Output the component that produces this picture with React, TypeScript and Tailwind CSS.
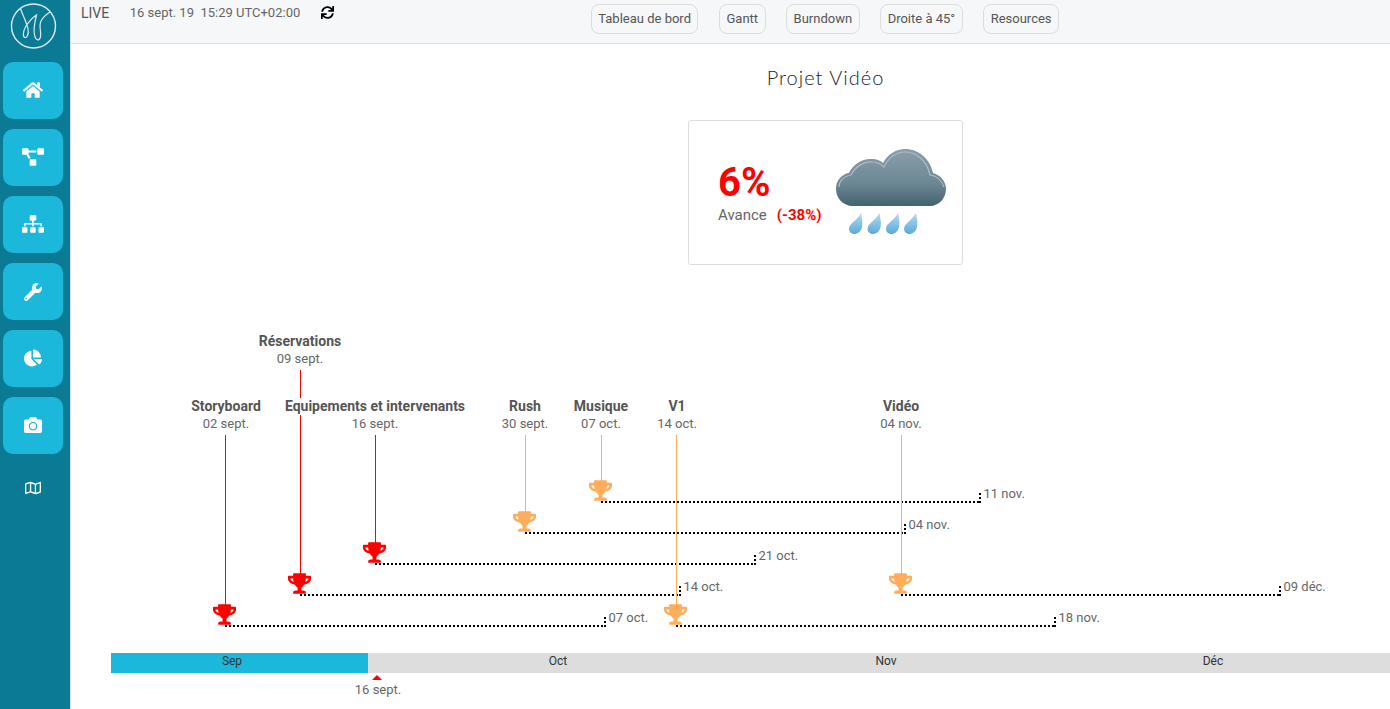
import { FaCamera, FaChartPie, FaHome, FaProjectDiagram, FaRegMap, FaSitemap, FaSync, FaTrophy, FaWrench } from 'react-icons/fa'

// the timeline canvas starts at x=71, y=300 of the page
const X0 = 71
const Y0 = 300

const RED = '#ff0000'
const ORANGE = '#ffad5a'

interface Milestone {
  title: string
  date: string
  labelX: number
  labelY: number
  lineX: number
  trophyY: number
  endX: number
  endDate: string
  color: string
}

const milestones: Milestone[] = [
  { title: 'Réservations', date: '09 sept.', labelX: 300, labelY: 333, lineX: 300, trophyY: 595, endX: 680, endDate: '14 oct.', color: RED },
  { title: 'Storyboard', date: '02 sept.', labelX: 226, labelY: 398, lineX: 225, trophyY: 626, endX: 605, endDate: '07 oct.', color: RED },
  { title: 'Equipements et intervenants', date: '16 sept.', labelX: 375, labelY: 398, lineX: 375, trophyY: 564, endX: 755, endDate: '21 oct.', color: RED },
  { title: 'Rush', date: '30 sept.', labelX: 525, labelY: 398, lineX: 525, trophyY: 533, endX: 905, endDate: '04 nov.', color: ORANGE },
  { title: 'Musique', date: '07 oct.', labelX: 601, labelY: 398, lineX: 601, trophyY: 502, endX: 980, endDate: '11 nov.', color: ORANGE },
  { title: 'V1', date: '14 oct.', labelX: 677, labelY: 398, lineX: 676, trophyY: 626, endX: 1055, endDate: '18 nov.', color: ORANGE },
  { title: 'Vidéo', date: '04 nov.', labelX: 901, labelY: 398, lineX: 901, trophyY: 595, endX: 1280, endDate: '09 déc.', color: ORANGE },
]

const months = [
  { name: 'Sep', x: 232 },
  { name: 'Oct', x: 558 },
  { name: 'Nov', x: 886 },
  { name: 'Déc', x: 1213 },
]

const navItems = [
  { icon: <FaHome size={20} className="-mt-[2px]" />, active: true },
  { icon: <FaProjectDiagram size={22} className="-mt-[1px]" />, active: true },
  { icon: <FaSitemap size={22} className="-mt-[1px]" />, active: true },
  { icon: <FaWrench size={18} />, active: true },
  { icon: <FaChartPie size={18} className="-mt-[1px]" />, active: true },
  { icon: <FaCamera size={18} className="-mt-[1px]" />, active: true },
  { icon: <FaRegMap size={16} />, active: false },
]

const tabs = ['Tableau de bord', 'Gantt', 'Burndown', 'Droite à 45°', 'Resources']

function Logo() {
  return (
    <svg width="70" height="62" viewBox="0 0 70 62" fill="none" stroke="#dcecf0">
      <circle cx="33.5" cy="26" r="22" strokeWidth="1.4" />
      <path
        d="M20.5 8.5C23 16 27 23 28 29C29 34 27 38 25 37.5C22.5 37 23 31 26 26C30 20 35 16 36.5 15C35 21 33 29 34.5 35C35.5 40 39 42 40.5 37C41.5 31 38.5 26 41 21C43 17 47 14 50 12"
        strokeWidth="1.2"
      />
    </svg>
  )
}

function RainCloud() {
  return (
    <svg width="112" height="88" viewBox="0 0 112 88">
      <defs>
        <linearGradient id="cloud" x1="0" y1="0" x2="0" y2="1">
          <stop offset="0" stopColor="#8a9fab" />
          <stop offset="0.6" stopColor="#6d8795" />
          <stop offset="1" stopColor="#44616f" />
        </linearGradient>
        <linearGradient id="drop" x1="0" y1="0" x2="0" y2="1">
          <stop offset="0" stopColor="#b5dcf1" />
          <stop offset="1" stopColor="#5aa9d9" />
        </linearGradient>
      </defs>
      <path
        d="M17 57C7 57 0 49 0 40C0 31 6 25 13 24C17 15 27 9 36 10C41 10 45 12 47 14C52 5 60 0 69 0C83 0 94 10 97 24C104 26 110 32 110 40C110 49 103 57 94 57Z"
        fill="url(#cloud)"
      />
      <path
        d="M3 38C3 32 8 27 15 26C19 18 28 12 36 13C41 13 45 15 48 18C53 8 61 3 69 3C81 3 91 12 94 26C101 27 106 32 108 38"
        fill="none"
        stroke="#a9bcc6"
        strokeWidth="1.2"
      />
      {[13, 31.5, 50, 68].map((x) => (
        <path
          key={x}
          transform={`translate(${x} 64)`}
          d="M12 0C13 6 14 10 13 14C12 19 8 21 5.5 21C2 21 0 18.5 0 16C0 10 8 8 12 0Z"
          fill="url(#drop)"
        />
      ))}
    </svg>
  )
}

function MilestoneMark({ m }: { m: Milestone }) {
  const lineTop = m.labelY + 37
  return (
    <>
      <div
        className="absolute w-px"
        style={{ left: m.lineX - X0, top: lineTop - Y0, height: m.trophyY - 18 - lineTop, backgroundColor: m.color }}
      />
      <FaTrophy
        size={23}
        className="absolute"
        style={{ left: m.lineX - X0 - 12, top: m.trophyY - 23 - Y0, color: m.color }}
      />
      <div
        className="absolute h-[2px] bg-[repeating-linear-gradient(90deg,#000_0_2px,transparent_2px_4px)]"
        style={{ left: m.lineX - X0, top: m.trophyY - Y0 - 1, width: m.endX - m.lineX + 1 }}
      />
      <div
        className="absolute h-[12px] w-[2px] bg-[repeating-linear-gradient(0deg,#000_0_2px,transparent_2px_4px)]"
        style={{ left: m.endX - 1 - X0, top: m.trophyY - 11 - Y0 }}
      />
      <span
        className="absolute text-[13px] leading-4 text-[#666] whitespace-nowrap"
        style={{ left: m.endX + 3.5 - X0, top: m.trophyY - 16 - Y0 }}
      >
        {m.endDate}
      </span>
    </>
  )
}

function MilestoneLabel({ m }: { m: Milestone }) {
  return (
    <div
      className="absolute flex flex-col items-center -translate-x-1/2 whitespace-nowrap"
      style={{ left: m.labelX - X0, top: m.labelY - Y0 }}
    >
      <span className="bg-white text-sm leading-[17px] font-bold text-[#555]">{m.title}</span>
      <span className="text-[13px] leading-[17px] text-[#666]">{m.date}</span>
    </div>
  )
}

export default function App() {
  return (
    <div className="flex h-screen overflow-hidden bg-white font-['Roboto',sans-serif]">
      <aside className="flex w-[71px] shrink-0 flex-col border-r border-[#ddd] bg-[#0a7a95]">
        <Logo />
        <nav className="flex flex-col gap-[10px] pl-[3px]">
          {navItems.map((item, i) => (
            <div
              key={i}
              className={`flex h-[57px] w-[60px] items-center justify-center rounded-[10px] text-white ${item.active ? 'bg-[#1cb8dc]' : 'pb-[10px]'}`}
            >
              {item.icon}
            </div>
          ))}
        </nav>
      </aside>

      <main className="flex min-w-0 flex-1 flex-col">
        <header className="relative flex h-[44px] shrink-0 items-start border-b border-[#ddd] bg-[#f6f7f9] pl-[10px]">
          <span className="mt-[4px] text-sm leading-[18px] text-[#555]">LIVE</span>
          <span className="ml-[20.5px] mt-[4px] text-[13px] leading-[18px] text-[#666] whitespace-pre">16 sept. 19  15:29 UTC+02:00</span>
          <FaSync size={13} className="ml-[20.5px] mt-[6px] text-black" />
          <div className="ml-[257px] mt-[4px] flex gap-[20.5px]">
            {tabs.map((t) => (
              <button
                key={t}
                className="h-[30px] rounded-lg border border-[#ddd] px-[6.5px] text-[13px] text-[#555] whitespace-nowrap"
              >
                {t}
              </button>
            ))}
          </div>
        </header>

        <div className="ml-[617px] w-[275px] shrink-0">
          <h1 className="mt-[19px] text-center font-['Lato',sans-serif] text-xl leading-7 font-light tracking-[1px] text-[#222]">
            Projet Vidéo
          </h1>
          <div className="mt-[29px] flex h-[145px] items-center rounded-[3px] border border-[#ddd] pl-[29px]">
            <div className="flex flex-col pt-[1px]">
              <span className="text-[40px] leading-[44px] font-bold text-[#ff0000]">6%</span>
              <div className="flex gap-[10px] text-[15px] leading-5">
                <span className="text-[#666]">Avance</span>
                <span className="font-bold text-[#ff0000]">(-38%)</span>
              </div>
            </div>
            <div className="ml-[14px]">
              <RainCloud />
            </div>
          </div>
        </div>

        {/* timeline: milestones are placed by their dates on a free canvas */}
        <div className="relative mt-[35px] h-[409px] shrink-0">
          {milestones.map((m) => (
            <MilestoneMark key={m.title} m={m} />
          ))}
          {milestones.map((m) => (
            <MilestoneLabel key={m.title} m={m} />
          ))}

          <div className="absolute left-[40px] right-0 top-[353px] h-5 bg-[#ddd]">
            <div className="h-full w-[257px] bg-[#1cb8dc]" />
          </div>
          {months.map((mo) => (
            <span
              key={mo.name}
              className="absolute top-[353px] -translate-x-1/2 text-xs leading-4 text-[#333]"
              style={{ left: mo.x - X0 }}
            >
              {mo.name}
            </span>
          ))}
          <div className="absolute left-[301px] top-[375px] h-0 w-0 border-x-[5px] border-b-[5px] border-x-transparent border-b-[#ff0000]" />
          <span className="absolute left-[307px] top-[381px] -translate-x-1/2 text-[13px] leading-[18px] text-[#666] whitespace-nowrap">
            16 sept.
          </span>
        </div>
      </main>
    </div>
  )
}
